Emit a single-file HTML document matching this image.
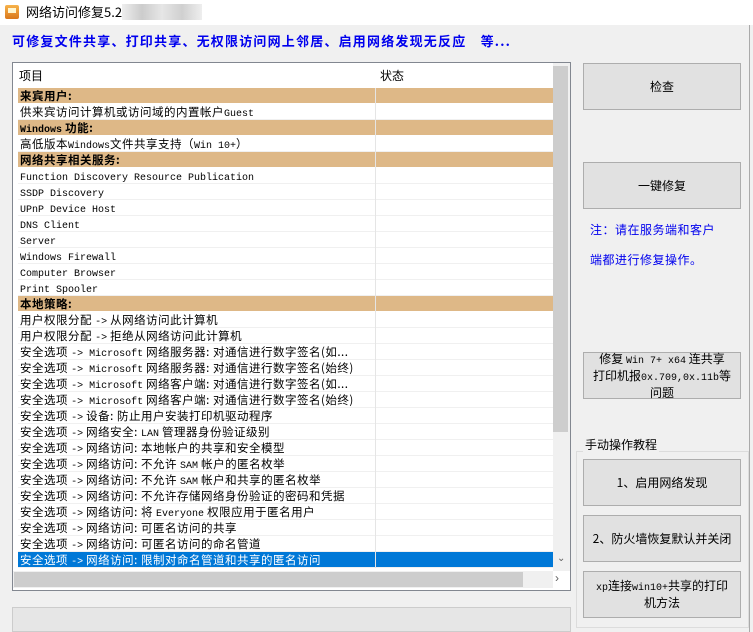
<!DOCTYPE html><html><head><meta charset="utf-8"><style>
*{margin:0;padding:0;box-sizing:border-box}
body{width:753px;height:632px;background:#f0f0f0;position:relative;overflow:hidden;font-family:"Liberation Sans","Noto Sans CJK SC",sans-serif;font-size:12px;color:#000}
.title{position:absolute;left:0;top:0;width:753px;height:25px;background:#fff}
.ico{position:absolute;left:5px;top:5px;width:14px;height:14px;background:linear-gradient(#f7b34a,#d9771b);border-radius:2px}
.ico:after{content:"";position:absolute;left:3px;top:3px;width:8px;height:5px;background:#fff6d0}
.tt{position:absolute;left:26px;top:4px;font-size:13px;font-family:"Noto Sans CJK SC",sans-serif;line-height:16px}
.blur{position:absolute;left:122px;top:4px;width:80px;height:16px;background:linear-gradient(90deg,#eee,#ccc,#e6e6e6,#d0d0d0,#eee)}
.head{position:absolute;left:12px;top:32px;font-weight:bold;color:#0000ee;font-size:13px;letter-spacing:1.2px;line-height:18px;font-family:"Noto Sans CJK SC",sans-serif}
.lv{position:absolute;left:12px;top:62px;width:559px;height:529px;border:1px solid #828790;background:#fff;overflow:hidden}
.hdr{position:absolute;left:0;top:0;width:540px;height:25px;background:#fff}
.hdr span{position:absolute;top:4px;font-family:"Noto Sans CJK SC",sans-serif;font-size:12px}
.rows{position:absolute;left:5px;top:25px;width:535px}
.r{height:16px;line-height:16px;border-bottom:1px solid #f0f0f0;white-space:nowrap;padding-left:2px;font-family:"Noto Sans CJK SC",sans-serif;font-size:11.5px;letter-spacing:0.5px;position:relative}
.r.g{background:#deb887;font-weight:bold;border-bottom:1px solid #fff}
.r.s{background:#0078d7;color:#fff}
.r:after{content:"";position:absolute;left:357px;top:0;width:1px;height:16px;background:#e5e5e5}
.m{font-family:"Liberation Mono",monospace;font-size:10px;letter-spacing:0}
.vs{position:absolute;left:540px;top:0;width:17px;height:508px;background:#f0f0f0}
.vt{position:absolute;left:540px;top:3px;width:15px;height:366px;background:#cdcdcd}
.hs{position:absolute;left:0;top:508px;width:540px;height:17px;background:#f0f0f0}
.ht{position:absolute;left:1px;top:509px;width:509px;height:15px;background:#cdcdcd}
.ar{position:absolute;color:#606060;font-size:10px}
.status{position:absolute;left:12px;top:607px;width:559px;height:25px;border:1px solid #ccc;background:#e6e6e6}
.btn{position:absolute;left:583px;width:158px;height:47px;background:#e1e1e1;border:1px solid #adadad;display:flex;align-items:center;justify-content:center}
.btn>div{text-align:center;font-family:"Noto Sans CJK SC",sans-serif;font-size:12px;line-height:14px}
.note{position:absolute;left:590px;color:#0000ee;font-family:"Noto Sans CJK SC",sans-serif;font-size:12px;letter-spacing:0.5px}
.grp{position:absolute;left:576px;top:451px;width:173px;height:177px;border:1px solid #dcdcdc}
.gl{position:absolute;left:583px;top:436px;background:#f0f0f0;padding:0 2px;font-family:"Noto Sans CJK SC",sans-serif;font-size:12px}
.rb{position:absolute;left:749px;top:25px;width:1px;height:607px;background:#aaa}
</style></head><body>
<div class="title"><div class="ico"></div><div class="tt">网络访问修复5.2 ·</div><div class="blur"></div></div>
<div class="head">可修复文件共享、打印共享、无权限访问网上邻居、启用网络发现无反应　等...</div>
<div class="lv">
<div class="hdr"><span style="left:6px">项目</span><span style="left:367px">状态</span></div>
<div class="rows">
<div class="r g">来宾用户:</div>
<div class="r">供来宾访问计算机或访问域的内置帐户<span class="m">Guest</span></div>
<div class="r g"><span class="m" style="font-weight:bold">Windows</span> 功能:</div>
<div class="r">高低版本<span class="m">Windows</span>文件共享支持（<span class="m">Win 10+</span>）</div>
<div class="r g">网络共享相关服务:</div>
<div class="r"><span class="m">Function Discovery Resource Publication</span></div>
<div class="r"><span class="m">SSDP Discovery</span></div>
<div class="r"><span class="m">UPnP Device Host</span></div>
<div class="r"><span class="m">DNS Client</span></div>
<div class="r"><span class="m">Server</span></div>
<div class="r"><span class="m">Windows Firewall</span></div>
<div class="r"><span class="m">Computer Browser</span></div>
<div class="r"><span class="m">Print Spooler</span></div>
<div class="r g">本地策略:</div>
<div class="r">用户权限分配 <span class="m">-&gt;</span> 从网络访问此计算机</div>
<div class="r">用户权限分配 <span class="m">-&gt;</span> 拒绝从网络访问此计算机</div>
<div class="r">安全选项 <span class="m">-&gt; Microsoft</span> 网络服务器: 对通信进行数字签名(如...</div>
<div class="r">安全选项 <span class="m">-&gt; Microsoft</span> 网络服务器: 对通信进行数字签名(始终)</div>
<div class="r">安全选项 <span class="m">-&gt; Microsoft</span> 网络客户端: 对通信进行数字签名(如...</div>
<div class="r">安全选项 <span class="m">-&gt; Microsoft</span> 网络客户端: 对通信进行数字签名(始终)</div>
<div class="r">安全选项 <span class="m">-&gt;</span> 设备: 防止用户安装打印机驱动程序</div>
<div class="r">安全选项 <span class="m">-&gt;</span> 网络安全: <span class="m">LAN</span> 管理器身份验证级别</div>
<div class="r">安全选项 <span class="m">-&gt;</span> 网络访问: 本地帐户的共享和安全模型</div>
<div class="r">安全选项 <span class="m">-&gt;</span> 网络访问: 不允许 <span class="m">SAM</span> 帐户的匿名枚举</div>
<div class="r">安全选项 <span class="m">-&gt;</span> 网络访问: 不允许 <span class="m">SAM</span> 帐户和共享的匿名枚举</div>
<div class="r">安全选项 <span class="m">-&gt;</span> 网络访问: 不允许存储网络身份验证的密码和凭据</div>
<div class="r">安全选项 <span class="m">-&gt;</span> 网络访问: 将 <span class="m">Everyone</span> 权限应用于匿名用户</div>
<div class="r">安全选项 <span class="m">-&gt;</span> 网络访问: 可匿名访问的共享</div>
<div class="r">安全选项 <span class="m">-&gt;</span> 网络访问: 可匿名访问的命名管道</div>
<div class="r s">安全选项 <span class="m">-&gt;</span> 网络访问: 限制对命名管道和共享的匿名访问</div>
</div>
<div class="vs"></div><div class="vt"></div>
<div class="ar" style="left:544px;top:490px">&#8964;</div>
<div class="hs"></div><div class="ht"></div>
<div class="ar" style="left:542px;top:508px;font-size:12px">&#8250;</div>
</div>
<div class="status"></div>
<div class="rb"></div>
<div class="btn" style="top:63px"><div>检查</div></div>
<div class="btn" style="top:162px"><div>一键修复</div></div>
<div class="note" style="top:221px">注：请在服务端和客户</div>
<div class="note" style="top:251px">端都进行修复操作。</div>
<div class="btn" style="top:352px"><div>修复 <span class="m">Win 7+ x64</span> 连共享<br>打印机报<span class="m">0x.709,0x.11b</span>等<br>问题</div></div>
<div class="grp"></div>
<div class="gl">手动操作教程</div>
<div class="btn" style="top:459px"><div>1、启用网络发现</div></div>
<div class="btn" style="top:515px"><div>2、防火墙恢复默认并关闭</div></div>
<div class="btn" style="top:571px"><div><span class="m">xp</span>连接<span class="m">win10+</span>共享的打印<br>机方法</div></div>
</body></html>
